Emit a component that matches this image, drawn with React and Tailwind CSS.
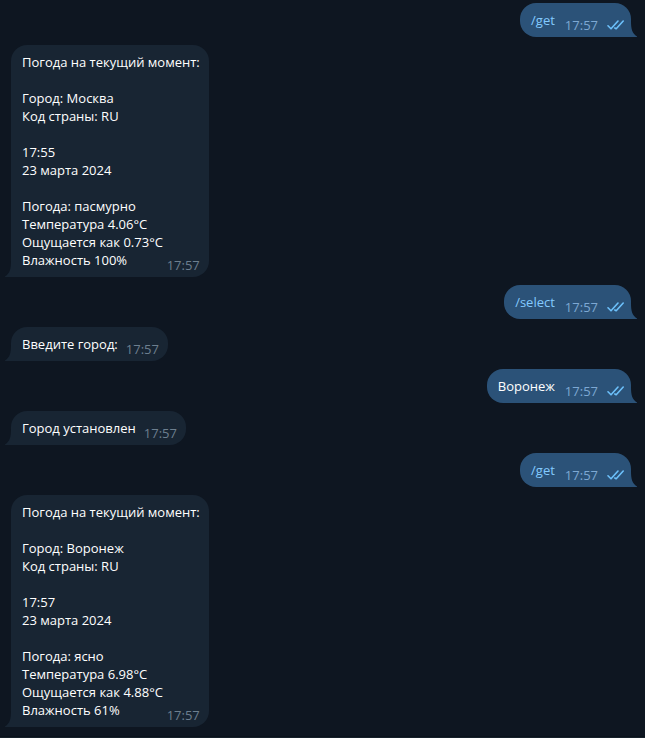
const weather = (city, time, sky, temp, feels, humidity) => [
  'Погода на текущий момент:',
  '',
  `Город: ${city}`,
  'Код страны: RU',
  '',
  time,
  '23 марта 2024',
  '',
  `Погода: ${sky}`,
  `Температура ${temp}°C`,
  `Ощущается как ${feels}°C`,
  `Влажность ${humidity}%`,
];

const messages = [
  { out: true, command: true, lines: ['/get'] },
  { lines: weather('Москва', '17:55', 'пасмурно', '4.06', '0.73', 100) },
  { out: true, command: true, lines: ['/select'] },
  { lines: ['Введите город:'] },
  { out: true, lines: ['Воронеж'] },
  { lines: ['Город установлен'] },
  { out: true, command: true, lines: ['/get'] },
  { lines: weather('Воронеж', '17:57', 'ясно', '6.98', '4.88', 61) },
];

function ReadTicks() {
  return (
    <svg className="h-[10px] w-[18px]" viewBox="0 0 18 10" fill="none" stroke="#6cc0fa" strokeWidth="1.6" strokeLinecap="round" strokeLinejoin="round" role="img" aria-label="Прочитано">
      <path d="M1 5.8 4 8.8 11 1M7.8 8 9.2 8.8 16.2 1" />
    </svg>
  );
}

function Tail({ out }) {
  return (
    <svg
      className={`absolute bottom-0 h-4 w-[6px] ${out ? 'left-full' : 'right-full -scale-x-100'}`}
      viewBox="0 0 6 16"
      fill={out ? '#2b5278' : '#182533'}
      aria-hidden="true"
    >
      <path d="M0 0C0 8 1 12 6 15.5V16H0Z" />
    </svg>
  );
}

function Message({ out, command, lines }) {
  const body = lines.slice(0, -1);
  const last = lines[lines.length - 1];
  return (
    <li
      className={`relative pl-[11px] py-2 rounded-t-2xl ${
        out ? 'self-end rounded-bl-2xl bg-[#2b5278] pr-[6px]' : 'self-start rounded-br-2xl bg-[#182533] pr-[9px]'
      }`}
    >
      {body.map((line, i) => (
        <p key={i} className="h-[18px]">{line}</p>
      ))}
      <div className={`flex justify-between ${out ? 'gap-[10px]' : 'gap-2'}`}>
        {command ? (
          <a href="#command" className="text-[#83caff]">{last}</a>
        ) : (
          <p>{last}</p>
        )}
        <div className={`flex items-center gap-[9px] -mb-[5px] mt-[5px] ${out ? 'text-[#7da8d3]' : 'text-[#6d7f8f]'}`}>
          <time dateTime="17:57">17:57</time>
          {out && <ReadTicks />}
        </div>
      </div>
      <Tail out={out} />
    </li>
  );
}

export default function App() {
  return (
    <main className="min-h-screen bg-[#0e1621] font-['Open_Sans',sans-serif] text-[13px] leading-[18px] text-white">
      <ul className="flex flex-col gap-2 pt-[3px] pb-[9px] pl-[11px] pr-[14px]">
        {messages.map((message, i) => (
          <Message key={i} {...message} />
        ))}
      </ul>
      <div className="h-[2px] border-t border-[#0a121b] bg-[#17212b]" />
    </main>
  );
}
